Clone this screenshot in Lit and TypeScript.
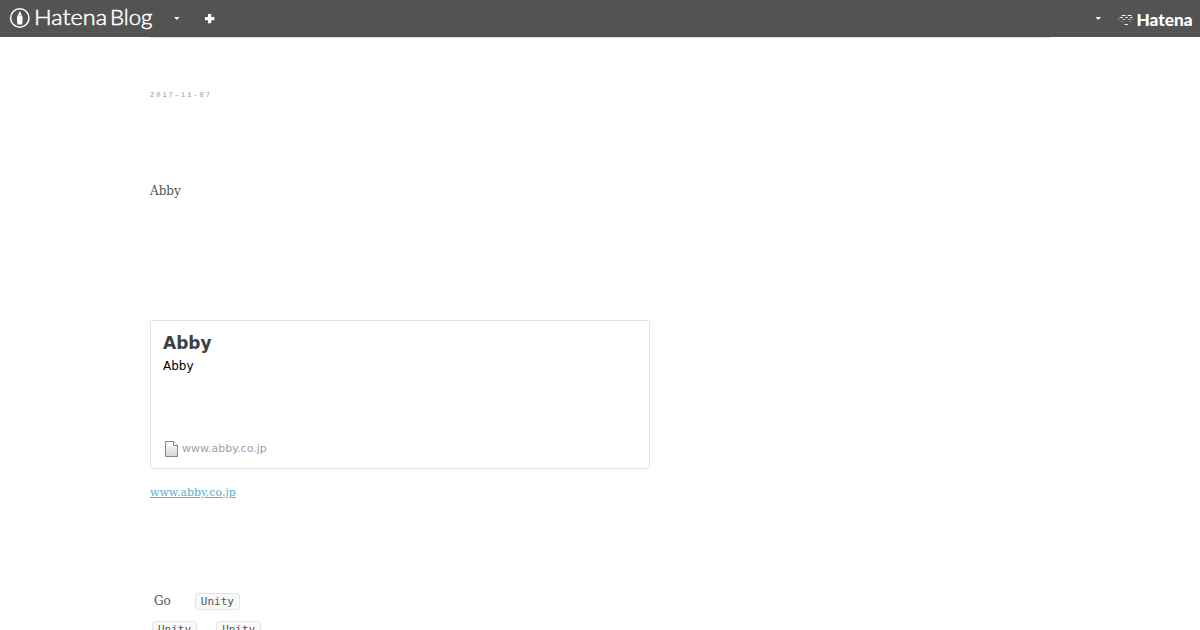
import { LitElement, html, css, svg } from 'lit';
import { customElement, property } from 'lit/decorators.js';

@customElement('blog-header')
export class BlogHeader extends LitElement {
  static styles = css`
    :host {
      display: flex;
      justify-content: space-between;
      height: 37px;
      background: #535353;
    }
    .group { display: flex; align-items: flex-start; }
    svg { display: block; fill: #fff; }
    .thin {
      font-family: Lato, 'Liberation Sans', sans-serif;
      font-size: 21px;
      font-weight: 300;
      stroke: #fff;
      stroke-width: 0.5;
    }
    .heavy {
      font-family: Lato, 'Liberation Sans', sans-serif;
      font-size: 16px;
      font-weight: 900;
    }
  `;

  // x, y, width, opacity
  private _dashes() {
    const rows = [
      [4.3, 15, 3.9, 1], [10, 15, 3.9, 1],
      [2, 17, 3.4, 0.9], [7.8, 17, 2.6, 0.9], [12.6, 17, 2.6, 0.9],
      [0, 19, 2, 0.45], [5, 19, 3, 0.6], [10.5, 19, 3, 0.6], [14.5, 19, 1.6, 0.35],
      [3.5, 21, 2, 0.3], [11.5, 21, 2, 0.3],
      [7, 24, 3.4, 0.9],
    ];
    return rows.map(
      ([x, y, w, o]) => svg`<rect x=${x} y=${y} width=${w} height="1" rx="0.3" opacity=${o} />`
    );
  }

  render() {
    return html`
      <div class="group">
        <svg width="160" height="37" viewBox="0 0 160 37">
          <circle cx="19.8" cy="18" r="9.2" fill="none" stroke="#fff" stroke-width="1.5" />
          <path d="M19.1 11.8 H20.5 L21.4 15 H18.2 Z M17.6 15.3 H22 L22.7 18.1 L22.2 24.6 H17.4 L16.9 18.1 Z" />
          <text class="thin" x="34" y="25.3" textLength="73" lengthAdjust="spacingAndGlyphs">Hatena</text>
          <text class="thin" x="110" y="25.3" textLength="42.5" lengthAdjust="spacingAndGlyphs">Blog</text>
        </svg>
        <svg width="60" height="37" viewBox="160 0 60 37">
          <path d="M174 17 H179.5 L176.8 20 Z" />
          <path d="M208 14 H211.2 V17 H214.4 V20.2 H211.2 V23.2 H208 V20.2 H205 V17 H208 Z" />
        </svg>
      </div>
      <div class="group">
        <svg width="110" height="37" viewBox="1090 0 110 37">
          <path d="M1095.6 17 H1101 L1098.3 20 Z" />
          <g transform="translate(1117.5 0)">${this._dashes()}</g>
          <text class="heavy" x="1136.5" y="26" textLength="56" lengthAdjust="spacingAndGlyphs">Hatena</text>
        </svg>
      </div>
    `;
  }
}

@customElement('link-card')
export class LinkCard extends LitElement {
  @property() heading = '';
  @property() description = '';
  @property() domain = '';

  static styles = css`
    :host {
      display: flex;
      flex-direction: column;
      box-sizing: border-box;
      width: 500px;
      height: 149px;
      padding: 11px 12px 10px;
      border: 1px solid #e2e2e2;
      border-radius: 3px;
      font-family: 'DejaVu Sans', sans-serif;
    }
    .heading {
      color: #3d3f44;
      font-size: 17px;
      font-weight: bold;
      line-height: 22px;
    }
    .description {
      margin-top: 3px;
      color: #000;
      font-size: 12px;
      line-height: 18px;
    }
    .footer {
      display: flex;
      align-items: center;
      gap: 3px;
      height: 18px;
      margin-top: auto;
      color: #999fa5;
      font-size: 11px;
    }
    .footer span { padding-bottom: 2px; }
    svg { display: block; }
  `;

  render() {
    return html`
      <div class="heading">${this.heading}</div>
      <div class="description">${this.description}</div>
      <div class="footer">
        <svg width="16" height="18" viewBox="0 0 16 18">
          <defs>
            <linearGradient id="paper" x2="0" y2="1">
              <stop offset="0" stop-color="#fff" />
              <stop offset="1" stop-color="#d5d5d5" />
            </linearGradient>
          </defs>
          <path d="M2.5 1.5 H10.5 L14.5 5.5 V16.5 H2.5 Z" fill="url(#paper)" stroke="#858585" />
          <path d="M10.5 1.5 V5.5 H14.5" fill="#fff" stroke="#858585" />
        </svg>
        <span>${this.domain}</span>
      </div>
    `;
  }
}

@customElement('app-root')
export class AppRoot extends LitElement {
  static styles = css`
    :host {
      display: block;
      height: 630px;
      overflow: hidden;
      background: #fff;
      color: #555;
      font-family: 'DejaVu Serif', serif;
      font-size: 12px;
    }
    .page {
      width: 900px;
      margin: 0 auto;
      border-top: 1px solid #ddd;
    }
    .date {
      display: block;
      padding-top: 52px;
      color: #999;
      font-family: 'Liberation Mono', monospace;
      font-size: 7px;
      line-height: 10px;
      letter-spacing: 2px;
    }
    .text {
      margin: 82px 0 120px;
      line-height: 18px;
    }
    .source {
      display: block;
      margin-top: 16px;
      color: #5aafd0;
      font-size: 11px;
      line-height: 16px;
    }
    .row {
      display: flex;
      align-items: center;
      height: 28px;
    }
    .first {
      gap: 24px;
      margin-top: 86px;
      padding-left: 4px;
    }
    .second { gap: 19px; padding-left: 2px; }
    code {
      padding: 1px 5px 0;
      border: 1px solid #e6e6e6;
      border-radius: 3px;
      background: #f9f9f9;
      font-family: 'DejaVu Sans Mono', monospace;
      font-size: 11px;
      line-height: 14px;
    }
  `;

  render() {
    return html`
      <blog-header></blog-header>
      <main class="page">
        <time class="date">2017-11-07</time>
        <p class="text">Abby</p>
        <link-card heading="Abby" description="Abby" domain="www.abby.co.jp"></link-card>
        <a class="source" href="#">www.abby.co.jp</a>
        <div class="row first">
          <span>Go</span>
          <code>Unity</code>
        </div>
        <div class="row second">
          <code>Unity</code>
          <code>Unity</code>
        </div>
      </main>
    `;
  }
}
